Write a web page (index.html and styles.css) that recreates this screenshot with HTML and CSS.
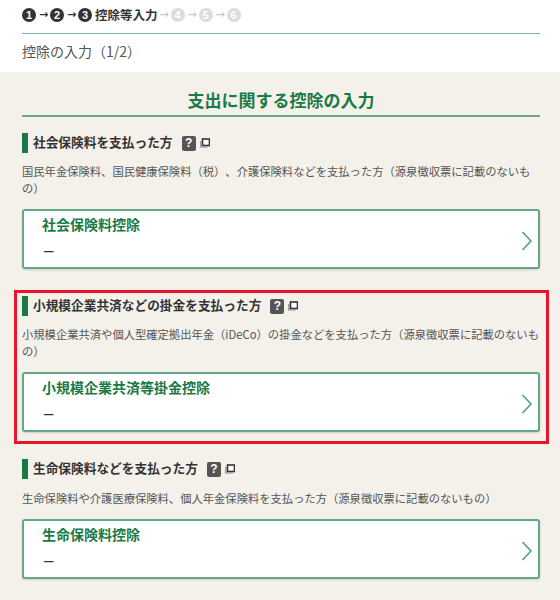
FILE: index.html
```html
<!DOCTYPE html>
<html lang="ja">
<head>
<meta charset="utf-8">
<title>控除の入力</title>
<link rel="stylesheet" href="styles.css">
</head>
<body>
<header class="top">
  <div class="steps">
    <span class="dot">1</span><span class="arr">→</span><span class="dot">2</span><span class="arr">→</span><span class="dot">3</span><span class="step-label">控除等入力</span><span class="arr off">→</span><span class="dot off">4</span><span class="arr off">→</span><span class="dot off">5</span><span class="arr off">→</span><span class="dot off">6</span>
  </div>
  <p class="page-title">控除の入力（1/2）</p>
</header>
<main class="main">
  <h1 class="heading">支出に関する控除の入力</h1>

  <section class="sec">
    <h2 class="sec-title"><span class="sec-text">社会保険料を支払った方</span><span class="q">?</span><svg class="win" viewBox="0 0 10 10"><rect x="2.5" y="1" width="7" height="6.5" fill="#fff" stroke="#333" stroke-width="1.6"/><path d="M.8 3v6h7" fill="none" stroke="#888" stroke-width="1.2"/></svg></h2>
    <p class="desc">国民年金保険料、国民健康保険料（税）、介護保険料などを支払った方（源泉徴収票に記載のないもの）</p>
    <a class="card"><span class="card-title">社会保険料控除</span><span class="card-val">–</span><svg class="chev" viewBox="0 0 12 20"><path d="M1.500 1l8.500 9-8.500 9" fill="none" stroke="#4f9a78" stroke-width="1.500"/></svg></a>
  </section>

  <section class="sec hl">
    <h2 class="sec-title"><span class="sec-text">小規模企業共済などの掛金を支払った方</span><span class="q">?</span><svg class="win" viewBox="0 0 10 10"><rect x="2.5" y="1" width="7" height="6.5" fill="#fff" stroke="#333" stroke-width="1.6"/><path d="M.8 3v6h7" fill="none" stroke="#888" stroke-width="1.2"/></svg></h2>
    <p class="desc">小規模企業共済や個人型確定拠出年金（iDeCo）の掛金などを支払った方（源泉徴収票に記載のないもの）</p>
    <a class="card"><span class="card-title">小規模企業共済等掛金控除</span><span class="card-val">–</span><svg class="chev" viewBox="0 0 12 20"><path d="M1.500 1l8.500 9-8.500 9" fill="none" stroke="#4f9a78" stroke-width="1.500"/></svg></a>
  </section>

  <section class="sec">
    <h2 class="sec-title"><span class="sec-text">生命保険料などを支払った方</span><span class="q">?</span><svg class="win" viewBox="0 0 10 10"><rect x="2.5" y="1" width="7" height="6.5" fill="#fff" stroke="#333" stroke-width="1.6"/><path d="M.8 3v6h7" fill="none" stroke="#888" stroke-width="1.2"/></svg></h2>
    <p class="desc">生命保険料や介護医療保険料、個人年金保険料を支払った方（源泉徴収票に記載のないもの）</p>
    <a class="card"><span class="card-title">生命保険料控除</span><span class="card-val">–</span><svg class="chev" viewBox="0 0 12 20"><path d="M1.500 1l8.500 9-8.500 9" fill="none" stroke="#4f9a78" stroke-width="1.500"/></svg></a>
  </section>
</main>
</body>
</html>
```
FILE: styles.css
```css
* { box-sizing: border-box; }
html, body { margin: 0; padding: 0; }
body {
  width: 560px;
  height: 600px;
  overflow: hidden;
  background: #f4f1ea;
  color: #333;
  font-family: "Noto Sans CJK JP", "Liberation Sans", sans-serif;
  text-spacing-trim: space-all;
}
.top { background: #fff; height: 72px; padding: 0 20px 0 22px; }
.steps {
  height: 34px;
  border-bottom: 1px solid #7ab59b;
  display: flex;
  align-items: center;
  padding-bottom: 4px;
  font-size: 13px;
  font-weight: 700;
}
.dot {
  width: 14px;
  height: 14px;
  margin-right: 1px;
  border-radius: 50%;
  background: #333;
  color: #fff;
  font-family: "Liberation Sans", sans-serif;
  font-size: 11px;
  line-height: 14px;
  text-align: center;
}
.dot.off { background: #dcdcdc; }
.arr {
  width: 13px;
  text-align: center;
  font-size: 11px;
  font-family: "DejaVu Sans", sans-serif;
  color: #333;
}
.arr.off { color: #ccc; }
.step-label { margin-left: 2px; font-size: 12.500px; color: #333; }
.page-title { margin: 0; padding-top: 7px; font-size: 14px; line-height: 21px; color: #555; }
.main { padding: 0 20px 0 22px; }
.heading {
  margin: 0;
  height: 45px;
  border-bottom: 2px solid #6aa887;
  padding-top: 16px;
  text-align: center;
  font-size: 17px;
  line-height: 24px;
  font-weight: 700;
  color: #1a7a46;
}
.sec { margin-top: 16px; }
.sec-title {
  margin: 0;
  height: 20px;
  display: flex;
  align-items: center;
  border-left: 6px solid #1a7a46;
  padding-left: 5px;
  padding-bottom: 3px;
  font-size: 12.700px;
  font-weight: 700;
  color: #333;
}
.q {
  margin: 4px 0 0 9px;
  width: 14px;
  height: 15px;
  border-radius: 2px;
  background: #555;
  color: #fff;
  font-family: "Liberation Sans", sans-serif;
  font-size: 12px;
  line-height: 15px;
  text-align: center;
  font-weight: 700;
}
.win { width: 10px; height: 10px; margin: 3px 0 0 4px; }
.desc {
  margin: 10px 0 0;
  font-size: 11.300px;
  line-height: 17px;
  color: #555;
}
.card {
  position: relative;
  display: block;
  margin-top: 12px;
  height: 60px;
  background: #fff;
  border: 2px solid #64a888;
  border-radius: 3px;
  box-shadow: 0 1px 2px rgba(0, 0, 0, .15);
  padding: 1px 0 0 18px;
}
.card-title {
  display: block;
  font-size: 14px;
  line-height: 24px;
  font-weight: 700;
  color: #1a7a46;
}
.card-val {
  display: block;
  margin-top: 5px;
  padding-left: 2px;
  font-family: "Liberation Sans", sans-serif;
  font-size: 17px;
  line-height: 20px;
  color: #333;
}
.chev { position: absolute; right: 5px; top: 20px; width: 12px; height: 20px; }
.hl {
  margin: 21px -9px 0 -8px;
  border: 3px solid #e8142a;
  padding: 3px 6px 9px 5px;
}
.hl + .sec { margin-top: 15px; }
.hl + .sec .desc { margin-top: 11px; }
```
